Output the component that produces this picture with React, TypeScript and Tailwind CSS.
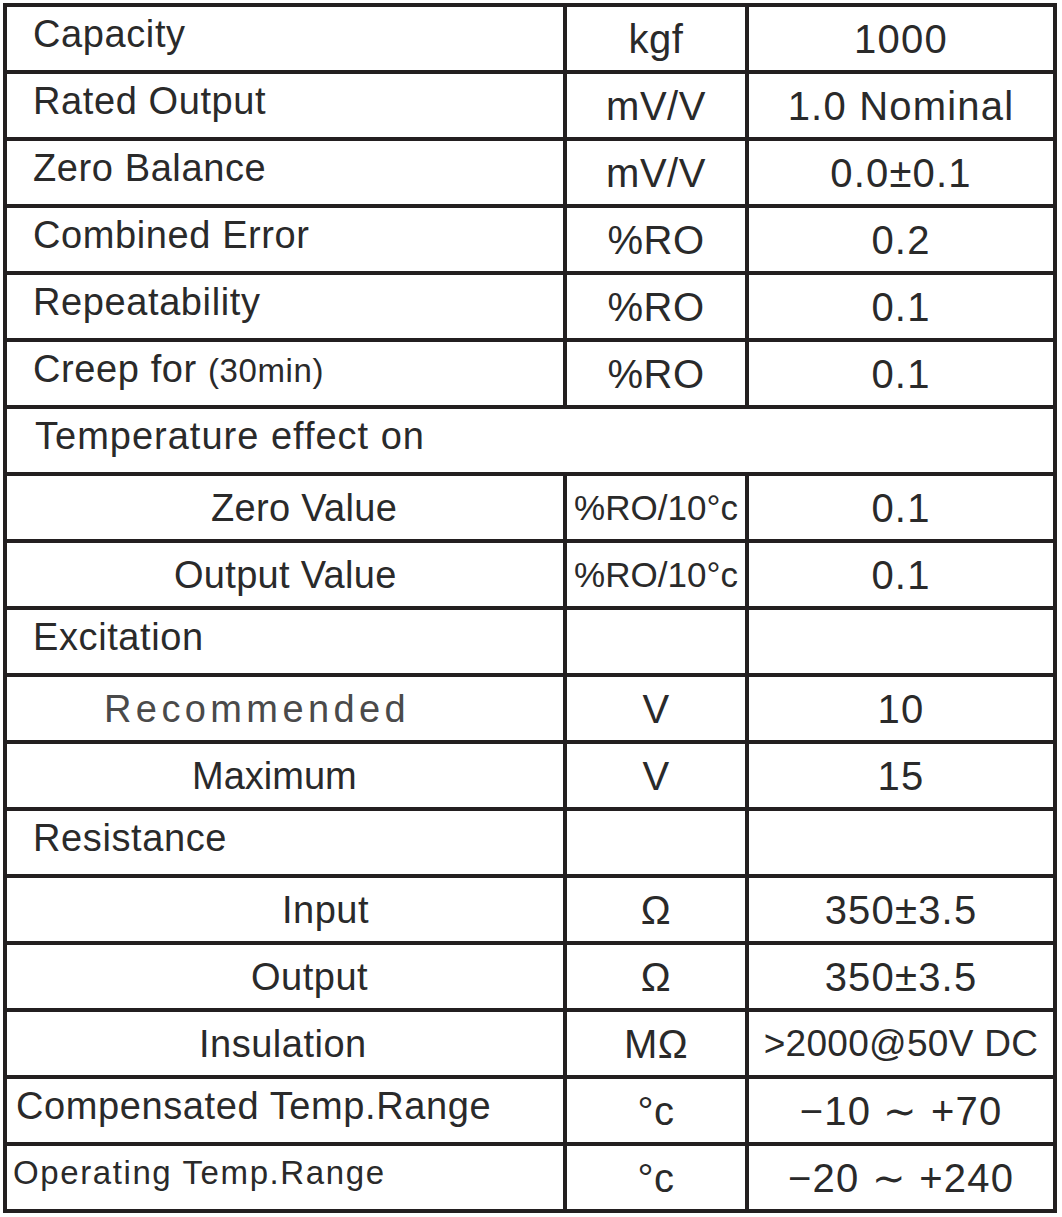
import type { ReactNode } from "react";

interface SpecRow {
  label: ReactNode;
  unit?: ReactNode;
  value?: ReactNode;
  labelClass: string;
  unitClass?: string;
  valueClass?: string;
  span?: boolean;
}

const LEFT = "pl-[26px] pb-[10px] text-[38px] tracking-[0.6px]";

const rows: SpecRow[] = [
  { label: "Capacity", unit: "kgf", value: "1000", labelClass: LEFT },
  { label: "Rated Output", unit: "mV/V", value: "1.0 Nominal", labelClass: LEFT },
  { label: "Zero Balance", unit: "mV/V", value: "0.0±0.1", labelClass: LEFT },
  { label: "Combined Error", unit: "%RO", value: "0.2", labelClass: LEFT },
  { label: "Repeatability", unit: "%RO", value: "0.1", labelClass: LEFT },
  {
    label: (
      <span>
        Creep for <span className="text-[33px]">(30min)</span>
      </span>
    ),
    unit: "%RO",
    value: "0.1",
    labelClass: LEFT,
  },
  {
    label: "Temperature effect on",
    labelClass: "pl-[28px] pb-[10px] text-[38px] tracking-[1px]",
    span: true,
  },
  {
    label: "Zero Value",
    unit: "%RO/10°c",
    value: "0.1",
    labelClass: "pl-[204px] text-[38px] tracking-[0.3px]",
    unitClass: "text-[35px] tracking-[0px]",
  },
  {
    label: "Output Value",
    unit: "%RO/10°c",
    value: "0.1",
    labelClass: "pl-[167px] text-[38px] tracking-[0.3px]",
    unitClass: "text-[35px] tracking-[0px]",
  },
  { label: "Excitation", unit: "", value: "", labelClass: LEFT },
  {
    label: "Recommended",
    unit: "V",
    value: "10",
    labelClass: "pl-[97px] text-[38px] tracking-[4.4px] text-[#4a4a4a]",
  },
  { label: "Maximum", unit: "V", value: "15", labelClass: "pl-[185px] text-[38px]" },
  { label: "Resistance", unit: "", value: "", labelClass: LEFT },
  { label: "Input", unit: "Ω", value: "350±3.5", labelClass: "pl-[275px] text-[38px] tracking-[0.5px]" },
  { label: "Output", unit: "Ω", value: "350±3.5", labelClass: "pl-[244px] text-[38px] tracking-[0.5px]" },
  {
    label: "Insulation",
    unit: "MΩ",
    value: ">2000@50V DC",
    labelClass: "pl-[192px] text-[38px] tracking-[0.5px]",
    valueClass: "text-[37px] tracking-[0.3px]",
  },
  {
    label: "Compensated Temp.Range",
    unit: "°c",
    value: "−10 ∼ +70",
    labelClass: "pl-[9px] pb-[10px] text-[38px] tracking-[0.6px]",
  },
  {
    label: "Operating Temp.Range",
    unit: "°c",
    value: "−20 ∼ +240",
    labelClass: "pl-[6px] pb-[10px] text-[33px] tracking-[1.6px]",
  },
];

const App = () => {
  return (
    <div className="min-h-screen bg-white pt-[3px] pl-[3px]">
      <div
        className="grid w-[1054px] grid-cols-[556px_178px_304px] gap-[4px] bg-[#231f20] p-[4px] text-[#2a2a2a]"
        style={{ fontFamily: '"Liberation Sans", Arial, sans-serif' }}
      >
        {rows.map((row, i) =>
          row.span ? (
            <div
              key={i}
              className={`col-span-3 flex h-[63px] items-center bg-white leading-none ${row.labelClass}`}
            >
              {row.label}
            </div>
          ) : (
            <div key={i} className="contents">
              {/* LABEL */}
              <div className={`flex h-[63px] items-center bg-white leading-none whitespace-pre ${row.labelClass}`}>
                {row.label}
              </div>

              {/* UNIT */}
              <div
                className={`flex h-[63px] items-center justify-center bg-white leading-none whitespace-nowrap ${
                  row.unitClass ?? "text-[40px] tracking-[0.5px]"
                }`}
              >
                {row.unit}
              </div>

              {/* VALUE */}
              <div
                className={`flex h-[63px] items-center justify-center bg-white leading-none whitespace-nowrap ${
                  row.valueClass ?? "text-[40px] tracking-[1.2px]"
                }`}
              >
                {row.value}
              </div>
            </div>
          )
        )}
      </div>
    </div>
  );
};

export default App;
